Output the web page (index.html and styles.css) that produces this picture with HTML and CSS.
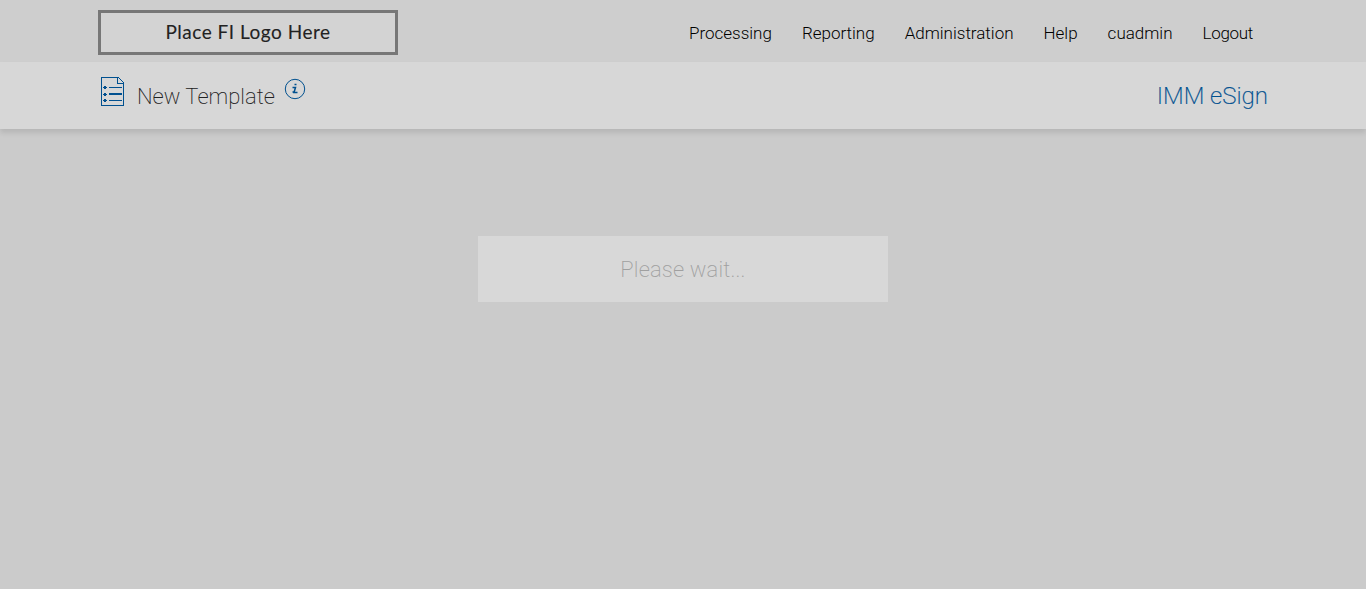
FILE: index.html
```html
<!DOCTYPE html>
<html lang="en">
<head>
    <meta charset="UTF-8">
    <meta name="viewport" content="width=device-width, initial-scale=1.0">
    <title>IMM eSign - New Template</title>
    <link rel="stylesheet" href="styles.css">
</head>
<body>
    <header class="top-bar">
        <div class="logo">Place FI Logo Here</div>
        <nav class="main-nav">
            <a href="#">Processing</a>
            <a href="#">Reporting</a>
            <a href="#">Administration</a>
            <a href="#">Help</a>
            <a href="#">cuadmin</a>
            <a href="#" class="logout">Logout</a>
        </nav>
    </header>

    <div class="title-bar">
        <svg class="template-icon" width="25" height="30" viewBox="0 0 25 30" shape-rendering="crispEdges">
            <path d="M.5 .5H17.5L22.5 5.5V28.5H.5Z M16.5 .5V6.5H22.5" />
            <path d="M8 10.5H21 M8 23.5H21" />
            <path class="thick" d="M8 17H21" />
            <path d="M2 10.5H6 M2 17.5H6 M2 23.5H6" />
            <path class="dots" d="M3 10.5H5 M3 17.5H5 M3 23.5H5" />
        </svg>
        <h1>New Template</h1>
        <svg class="info-icon" width="22" height="22" viewBox="0 0 22 22">
            <circle cx="11" cy="11" r="9.7" />
            <path class="letter" d="M8.5 9.5H11.5L10 14.5H13.5 M8.5 14H10 M10.5 6.5H12.5" />
        </svg>
        <span class="product">IMM eSign</span>
    </div>

    <main>
        <div class="wait-box">Please wait...</div>
    </main>
</body>
</html>
```
FILE: styles.css
```css
body {
    font-family: Roboto, "Liberation Sans", sans-serif;
    font-weight: 300;
    background-color: #cbcbcb;
    margin: 0;
    min-height: 100vh;
}

.top-bar {
    display: flex;
    align-items: flex-start;
    justify-content: space-between;
    box-sizing: border-box;
    height: 62px;
    padding: 10px 113px 0 98px;
    background-color: #cecece;
}

.logo {
    box-sizing: border-box;
    width: 300px;
    height: 45px;
    border: 3px solid #777;
    background-color: #d3d3d3;
    color: #222;
    font-family: Lato, sans-serif;
    font-size: 19px;
    font-weight: 400;
    -webkit-text-stroke: 0.1px #222;
    letter-spacing: 0.5px;
    line-height: 37px;
    text-align: center;
}

.main-nav {
    display: flex;
    gap: 30px;
    padding-top: 12px;
}

.main-nav a {
    color: #000;
    font-size: 17px;
    line-height: 22px;
    text-decoration: none;
    white-space: nowrap;
}

.main-nav .logout {
    letter-spacing: -0.3px;
}

.title-bar {
    display: flex;
    align-items: flex-start;
    box-sizing: border-box;
    height: 67px;
    padding: 15px 98px 0 101px;
    background-color: #d7d7d7;
    box-shadow: 0 4px 5px rgba(0, 0, 0, 0.1);
}

.template-icon,
.info-icon {
    flex: none;
    fill: none;
    stroke: #00508f;
}

.template-icon .thick {
    stroke-width: 2;
}

.template-icon .dots {
    stroke-width: 3;
}

h1 {
    width: 138px;
    margin: 6px 9px 0 11px;
    color: #222;
    font-size: 22px;
    font-weight: 200;
    line-height: 28px;
    white-space: nowrap;
}

.info-icon {
    margin-top: 1px;
}

.info-icon .letter {
    stroke-width: 1.5;
}

.product {
    margin: 5px 0 0 auto;
    color: #00508f;
    -webkit-text-stroke: 0.2px #00508f;
    font-size: 24px;
    font-weight: 200;
    line-height: 28px;
}

.wait-box {
    width: 410px;
    height: 66px;
    margin: 107px auto 0;
    background-color: #d8d8d8;
    color: #a0a0a0;
    font-size: 22px;
    font-weight: 200;
    letter-spacing: 0.15px;
    line-height: 67px;
    text-align: center;
}
```
